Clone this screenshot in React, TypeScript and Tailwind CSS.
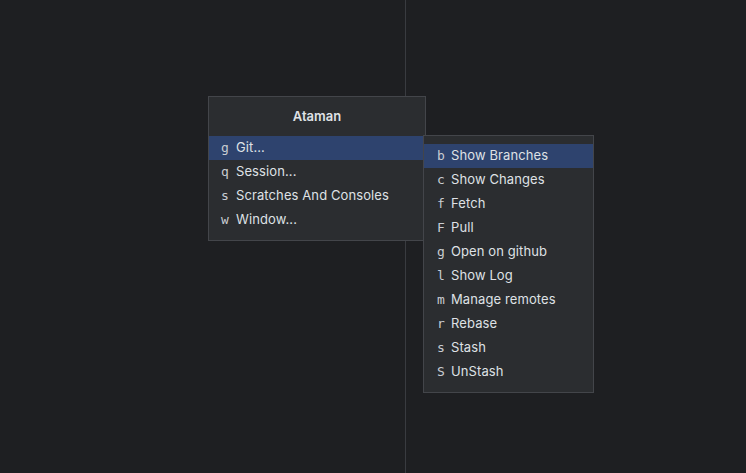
const mainItems = [
  { key: "g", label: "Git...", active: true },
  { key: "q", label: "Session..." },
  { key: "s", label: "Scratches And Consoles" },
  { key: "w", label: "Window..." },
];

const gitItems = [
  { key: "b", label: "Show Branches", active: true },
  { key: "c", label: "Show Changes" },
  { key: "f", label: "Fetch" },
  { key: "F", label: "Pull" },
  { key: "g", label: "Open on github" },
  { key: "l", label: "Show Log" },
  { key: "m", label: "Manage remotes" },
  { key: "r", label: "Rebase" },
  { key: "s", label: "Stash" },
  { key: "S", label: "UnStash" },
];

type Item = { key: string; label: string; active?: boolean };

function MenuRow({ item, pad, keyW }: { item: Item; pad: string; keyW: string }) {
  return (
    <div
      className={`flex h-6 items-center ${pad} ${
        item.active ? "bg-[#2e436e]" : ""
      }`}
    >
      <span
        className={`${keyW} text-[13px] text-[#c9ccd2]`}
        style={{ fontFamily: "'DejaVu Sans Mono', 'Liberation Mono', monospace" }}
      >
        {item.key}
      </span>
      <span className="text-[13px] tracking-[0.1px] text-[#dfe1e5]">{item.label}</span>
    </div>
  );
}

export default function App() {
  return (
    <div
      className="relative flex h-[473px] w-[746px] overflow-hidden bg-[#1e1f22]"
      style={{ fontFamily: "Inter, 'Noto Sans', sans-serif" }}
    >
      <div className="h-full w-[406px] border-r border-[#393b40]" />
      <div className="flex-1" />

      <div className="absolute left-[208px] top-[96px] w-[218px] border border-[#43454a] bg-[#2b2d30] pb-2">
        <div className="flex h-[39px] items-center justify-center text-[13px] font-semibold text-[#dfe1e5]">
          Ataman
        </div>
        {mainItems.map((item) => (
          <MenuRow key={item.key} item={item} pad="pl-3" keyW="w-[15px]" />
        ))}
      </div>

      <div className="absolute left-[423px] top-[135px] w-[171px] border border-[#43454a] bg-[#2b2d30] py-2">
        {gitItems.map((item) => (
          <MenuRow key={item.key + item.label} item={item} pad="pl-[13px]" keyW="w-[14px]" />
        ))}
      </div>
    </div>
  );
}
